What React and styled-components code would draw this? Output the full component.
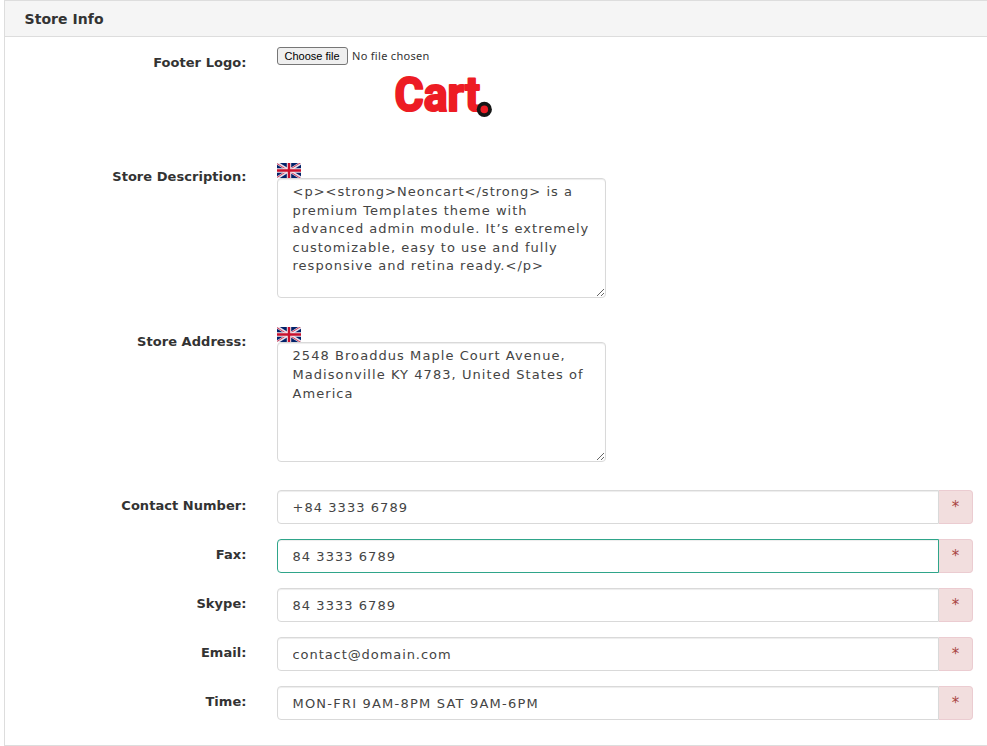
import React from "react";
import styled, { createGlobalStyle } from "styled-components";

const GlobalStyle = createGlobalStyle`
  * { box-sizing: border-box; }
  body {
    margin: 0;
    background: #fff;
    color: #333;
    font-family: Verdana, "DejaVu Sans", sans-serif;
    font-size: 13px;
    overflow: hidden;
  }
`;

const Panel = styled.section`
  height: 746px;
  margin-left: 4px;
  border: 1px solid #ddd;
  border-right: 0;
`;

const PanelHeading = styled.h3`
  height: 36px;
  margin: 0;
  padding-left: 19.5px;
  border-bottom: 1px solid #ddd;
  background: #f5f5f5;
  font-size: 14px;
  font-weight: bold;
  line-height: 37px;
  letter-spacing: 0.06px;
`;

const Form = styled.form`
  padding: 9px 14px 0 0;
`;

const Row = styled.div`
  display: grid;
  grid-template-columns: 241.5px minmax(0, 1fr);
  column-gap: 30.5px;
  height: ${(p) => p.$height}px;
`;

const Label = styled.label`
  padding-top: ${(p) => p.$top || 7}px;
  text-align: right;
  font-weight: bold;
  line-height: 18px;
  letter-spacing: 0.04px;
  white-space: nowrap;
`;

const Field = styled.div`
  display: flex;
  flex-direction: column;
  align-items: flex-start;
`;

const FilePicker = styled.div`
  display: flex;
  align-items: center;
  gap: 4px;
  height: 18px;
  margin-top: 1px;
  font-size: 11px;
`;

const FileButton = styled.button`
  width: 71px;
  height: 18px;
  padding: 0 1px 0 0;
  border: 1px solid #767676;
  border-radius: 3px;
  background: #efefef;
  color: #000;
  font: 11px/15px "Liberation Sans", Arial, sans-serif;
  white-space: nowrap;
`;

const FileName = styled.span`
  padding-bottom: 2px;
  font-family: "Noto Sans", Verdana, sans-serif;
  font-size: 11px;
  letter-spacing: 0.3px;
`;

const Logo = styled.svg`
  display: block;
  width: 110px;
  height: 62px;
  margin-left: 113px;
`;

const FlagIcon = styled.svg`
  display: block;
  width: 24px;
  height: 15px;
`;

const TextArea = styled.textarea`
  display: block;
  width: 329px;
  height: 120px;
  padding: ${(p) => p.$top || 4}px 14.5px;
  border: 1px solid #d9d9d9;
  border-radius: 4px;
  outline: 0;
  box-shadow: inset 0 1px 1px rgba(0, 0, 0, 0.075);
  color: #444;
  font: 13px/${(p) => p.$leading || 18.57}px Verdana, "DejaVu Sans", sans-serif;
  letter-spacing: ${(p) => p.$spacing || 1.02}px;
  white-space: pre;
  overflow: hidden;
  resize: both;
`;

const InputGroup = styled.div`
  display: flex;
  width: 696px;
  height: 34px;
`;

const TextInput = styled.input`
  width: 662px;
  height: 34px;
  padding: 0 14.5px;
  border: 1px solid ${(p) => (p.$active ? "#2fa58a" : "#d9d9d9")};
  border-radius: 4px 0 0 4px;
  outline: 0;
  box-shadow: inset 0 1px 1px rgba(0, 0, 0, 0.075);
  color: #444;
  font: 13px Verdana, "DejaVu Sans", sans-serif;
  letter-spacing: ${(p) => p.$spacing || 1.05}px;
`;

const Required = styled.span`
  width: 34px;
  height: 34px;
  border: 1px solid #ebccd1;
  border-left: 0;
  border-radius: 0 4px 4px 0;
  background: #f2dede;
  color: #a94442;
  font-size: 15px;
  line-height: 33px;
  text-align: center;
`;

function Flag() {
  return (
    <FlagIcon viewBox="0 0 24 15" aria-label="English">
      <path fill="#012169" d="M0 0h24v15H0z" />
      <path stroke="#e6dfeb" strokeWidth="3" d="M0 0l24 15M24 0L0 15" />
      <path stroke="#d0405a" strokeWidth="1" d="M0 .6l24 15M24 -.6L0 14.4" />
      <path stroke="#f4e4ea" strokeWidth="4.4" d="M12 0v15M0 7.5h24" />
      <path stroke="#c8102e" strokeWidth="2.4" d="M12 0v15M0 7.5h24" />
    </FlagIcon>
  );
}

const storeDescription = `<p><strong>Neoncart</strong> is a
premium Templates theme with
advanced admin module. It’s extremely
customizable, easy to use and fully
responsive and retina ready.</p>`;

const storeAddress = `2548 Broaddus Maple Court Avenue,
Madisonville KY 4783, United States of
America`;

const contacts = [
  { label: "Contact Number:", value: "+84 3333 6789" },
  { label: "Fax:", value: "84 3333 6789", active: true },
  { label: "Skype:", value: "84 3333 6789" },
  { label: "Email:", value: "contact@domain.com", spacing: 0.93 },
  { label: "Time:", value: "MON-FRI 9AM-8PM SAT 9AM-6PM", spacing: 1.21 },
];

export default function App() {
  return (
    <>
      <GlobalStyle />
      <Panel>
        <PanelHeading>Store Info</PanelHeading>
        <Form>
          <Row $height={117}>
            <Label $top={8}>Footer Logo:</Label>
            <Field>
              <FilePicker>
                <FileButton type="button">Choose file</FileButton>
                <FileName>No file chosen</FileName>
              </FilePicker>
              <Logo viewBox="0 0 110 62" aria-label="Cart">
                <text
                  x="4.6"
                  y="46"
                  fill="#ed1c24"
                  stroke="#ed1c24"
                  strokeWidth="2.2"
                  strokeLinejoin="round"
                  fontFamily="Roboto, sans-serif"
                  fontWeight="bold"
                  fontSize="47.5"
                  textLength="85.5"
                  lengthAdjust="spacingAndGlyphs"
                >
                  Cart
                </text>
                <circle cx="94.3" cy="44.4" r="7.6" fill="#161616" />
                <circle cx="94.3" cy="44.4" r="3.8" fill="#ed1c24" />
              </Logo>
            </Field>
          </Row>
          <Row $height={164}>
            <Label $top={5}>Store Description:</Label>
            <Field>
              <Flag />
              <TextArea defaultValue={storeDescription} />
            </Field>
          </Row>
          <Row $height={163}>
            <Label $top={6}>Store Address:</Label>
            <Field>
              <Flag />
              <TextArea defaultValue={storeAddress} $top={3} $leading={19} $spacing={1.06} />
            </Field>
          </Row>
          {contacts.map((c) => (
            <Row key={c.label} $height={49}>
              <Label>{c.label}</Label>
              <InputGroup>
                <TextInput defaultValue={c.value} $active={c.active} $spacing={c.spacing} />
                <Required>*</Required>
              </InputGroup>
            </Row>
          ))}
        </Form>
      </Panel>
    </>
  );
}
